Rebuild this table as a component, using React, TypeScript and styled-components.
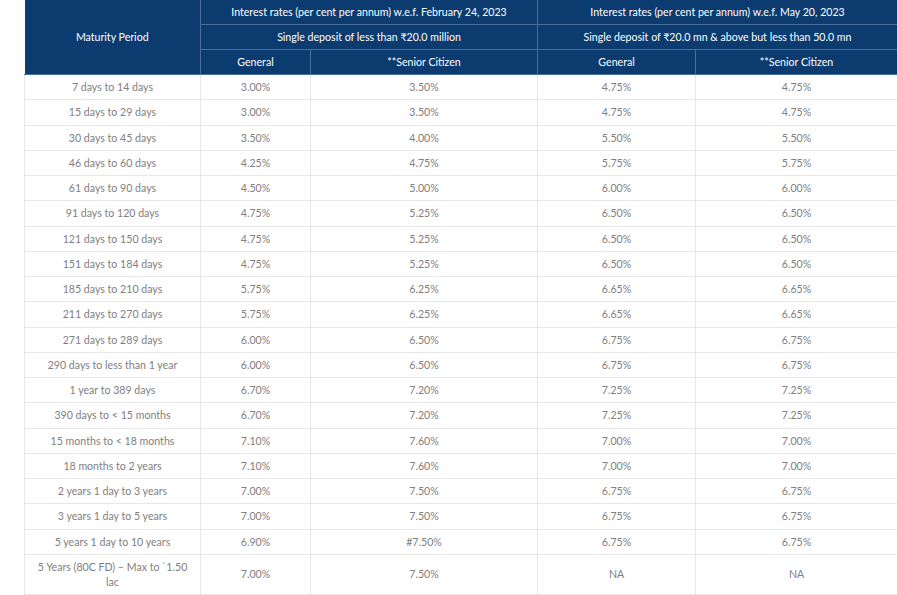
import React from "react";
import styled, { createGlobalStyle } from "styled-components";

const GlobalStyle = createGlobalStyle`
  html, body {
    margin: 0;
    padding: 0;
    background: #fff;
    font-family: Lato, "Noto Sans", sans-serif;
  }
`;

const Page = styled.div`
  padding-left: 24px;
  width: 873px;
`;

const Table = styled.table`
  width: 873px;
  border-collapse: collapse;
  table-layout: fixed;
  font-size: 10.6px;
`;

const HeadCell = styled.th`
  background: #0c3b6f;
  color: #fff;
  font-weight: 400;
  height: 24px;
  padding: 0 4px;
  text-align: center;
  border: 1px solid #47709b;
  border-top: none;
  &:first-child {
    border-left: none;
  }
`;

const Row = styled.tr<{ $tall?: boolean }>`
  height: ${(p) => (p.$tall ? "40px" : "25.25px")};
`;

const Cell = styled.td`
  color: #808080;
  text-align: center;
  padding: 1px 12px 0;
  border: 1px solid #e8e8e8;
  border-top: none;
  line-height: 15px;
`;

const rows: [string, string, string, string, string][] = [
  ["7 days to 14 days", "3.00%", "3.50%", "4.75%", "4.75%"],
  ["15 days to 29 days", "3.00%", "3.50%", "4.75%", "4.75%"],
  ["30 days to 45 days", "3.50%", "4.00%", "5.50%", "5.50%"],
  ["46 days to 60 days", "4.25%", "4.75%", "5.75%", "5.75%"],
  ["61 days to 90 days", "4.50%", "5.00%", "6.00%", "6.00%"],
  ["91 days to 120 days", "4.75%", "5.25%", "6.50%", "6.50%"],
  ["121 days to 150 days", "4.75%", "5.25%", "6.50%", "6.50%"],
  ["151 days to 184 days", "4.75%", "5.25%", "6.50%", "6.50%"],
  ["185 days to 210 days", "5.75%", "6.25%", "6.65%", "6.65%"],
  ["211 days to 270 days", "5.75%", "6.25%", "6.65%", "6.65%"],
  ["271 days to 289 days", "6.00%", "6.50%", "6.75%", "6.75%"],
  ["290 days to less than 1 year", "6.00%", "6.50%", "6.75%", "6.75%"],
  ["1 year to 389 days", "6.70%", "7.20%", "7.25%", "7.25%"],
  ["390 days to < 15 months", "6.70%", "7.20%", "7.25%", "7.25%"],
  ["15 months to < 18 months", "7.10%", "7.60%", "7.00%", "7.00%"],
  ["18 months to 2 years", "7.10%", "7.60%", "7.00%", "7.00%"],
  ["2 years 1 day to 3 years", "7.00%", "7.50%", "6.75%", "6.75%"],
  ["3 years 1 day to 5 years", "7.00%", "7.50%", "6.75%", "6.75%"],
  ["5 years 1 day to 10 years", "6.90%", "#7.50%", "6.75%", "6.75%"],
  ["5 Years (80C FD) – Max to `1.50 lac", "7.00%", "7.50%", "NA", "NA"],
];

export default function App() {
  return (
    <Page>
      <GlobalStyle />
      <Table>
        <colgroup>
          <col style={{ width: 176 }} />
          <col style={{ width: 110 }} />
          <col style={{ width: 227 }} />
          <col style={{ width: 158 }} />
          <col style={{ width: 202 }} />
        </colgroup>
        <thead>
          <tr>
            <HeadCell rowSpan={3}>Maturity Period</HeadCell>
            <HeadCell colSpan={2}>Interest rates (per cent per annum) w.e.f. February 24, 2023</HeadCell>
            <HeadCell colSpan={2}>Interest rates (per cent per annum) w.e.f. May 20, 2023</HeadCell>
          </tr>
          <tr>
            <HeadCell colSpan={2}>Single deposit of less than ₹20.0 million</HeadCell>
            <HeadCell colSpan={2}>Single deposit of ₹20.0 mn &amp; above but less than 50.0 mn</HeadCell>
          </tr>
          <tr>
            <HeadCell>General</HeadCell>
            <HeadCell>**Senior Citizen</HeadCell>
            <HeadCell>General</HeadCell>
            <HeadCell>**Senior Citizen</HeadCell>
          </tr>
        </thead>
        <tbody>
          {rows.map((r, i) => (
            <Row key={i} $tall={i === rows.length - 1}>
              {r.map((c, j) => (
                <Cell key={j}>{c}</Cell>
              ))}
            </Row>
          ))}
        </tbody>
      </Table>
    </Page>
  );
}
